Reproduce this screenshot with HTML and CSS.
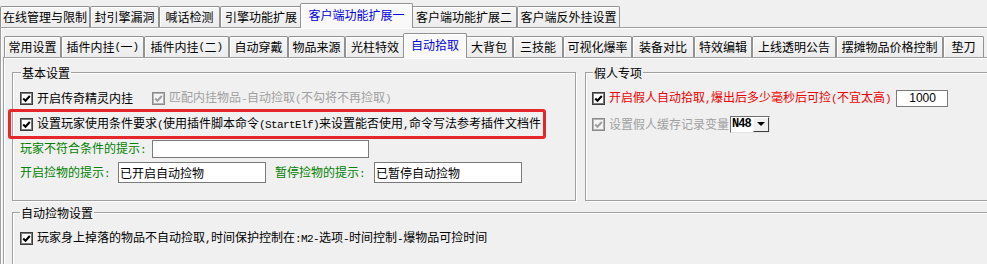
FILE: index.html
```html
<!DOCTYPE html>
<html lang="zh-CN">
<head>
<meta charset="utf-8">
<title>客户端功能扩展一</title>
<link rel="stylesheet" href="styles.css">
</head>
<body>
<div class="tabrow top">
  <div class="tab w90">在线管理与限制</div>
  <div class="tab w69">封引擎漏洞</div>
  <div class="tab w61">喊话检测</div>
  <div class="tab w82">引擎功能扩展</div>
  <div class="tab sel w113">客户端功能扩展一</div>
  <div class="tab w106">客户端功能扩展二</div>
  <div class="tab w103">客户端反外挂设置</div>
</div>
<div class="panel outer">
  <div class="tabrow sub">
    <div class="tab w57">常用设置</div>
    <div class="tab w83">插件内挂<span class="a">(</span>一<span class="a">)</span></div>
    <div class="tab w85">插件内挂<span class="a">(</span>二<span class="a">)</span></div>
    <div class="tab w59">自动穿戴</div>
    <div class="tab w57">物品来源</div>
    <div class="tab w60">光柱特效</div>
    <div class="tab sel w64">自动拾取</div>
    <div class="tab w48">大背包</div>
    <div class="tab w50">三技能</div>
    <div class="tab w69">可视化爆率</div>
    <div class="tab w62">装备对比</div>
    <div class="tab w58">特效编辑</div>
    <div class="tab w84">上线透明公告</div>
    <div class="tab w107">摆摊物品价格控制</div>
    <div class="tab w41">垫刀</div>
  </div>
  <div class="panel inner">
    <div class="grp-row">
      <div class="group g1">
        <span class="legend">基本设置</span>
        <div class="row">
          <svg class="cb" viewBox="0 0 13 13"><rect x="0.5" y="0.5" width="12" height="12" fill="#fff" stroke="#3c3c3c"/><rect x="1.5" y="1.5" width="10" height="10" fill="none" stroke="#7c7c7c"/><path d="M3.2 6.4l2.3 2.4L9.8 4" fill="none" stroke="#000" stroke-width="2.1"/></svg>
          <span>开启传奇精灵内挂</span>
          <svg class="cb gap19" viewBox="0 0 13 13"><rect x="0.5" y="0.5" width="12" height="12" fill="#f4f4f4" stroke="#8a8a8a"/><rect x="1.5" y="1.5" width="10" height="10" fill="none" stroke="#b4b4b4"/><path d="M3.2 6.4l2.3 2.4L9.8 4" fill="none" stroke="#a0a0a0" stroke-width="2.1"/></svg>
          <span class="dis">匹配内挂物品<span class="a">-</span>自动捡取<span class="a">(</span>不勾将不再捡取<span class="a">)</span></span>
        </div>
        <div class="hl">
          <svg class="cb" viewBox="0 0 13 13"><rect x="0.5" y="0.5" width="12" height="12" fill="#fff" stroke="#3c3c3c"/><rect x="1.5" y="1.5" width="10" height="10" fill="none" stroke="#7c7c7c"/><path d="M3.2 6.4l2.3 2.4L9.8 4" fill="none" stroke="#000" stroke-width="2.1"/></svg>
          <span>设置玩家使用条件要求<span class="a">(</span>使用插件脚本命令<span class="a">(StartElf)</span>来设置能否使用<span class="a">,</span>命令写法参考插件文档件</span>
        </div>
        <div class="row r3">
          <span class="lbl l132">玩家不符合条件的提示<span class="a">:</span></span>
          <span class="edit e1"></span>
        </div>
        <div class="row r4">
          <span class="lbl l98">开启捡物的提示<span class="a">:</span></span>
          <span class="edit e2">已开启自动捡物</span>
          <span class="lbl l99 gap9">暂停捡物的提示<span class="a">:</span></span>
          <span class="edit e2">已暂停自动捡物</span>
        </div>
      </div>
      <div class="group g2">
        <span class="legend lg7">假人专项</span>
        <div class="row">
          <svg class="cb" viewBox="0 0 13 13"><rect x="0.5" y="0.5" width="12" height="12" fill="#fff" stroke="#3c3c3c"/><rect x="1.5" y="1.5" width="10" height="10" fill="none" stroke="#7c7c7c"/><path d="M3.2 6.4l2.3 2.4L9.8 4" fill="none" stroke="#000" stroke-width="2.1"/></svg>
          <span class="red">开启假人自动拾取<span class="a">,</span>爆出后多少毫秒后可捡<span class="a">(</span>不宜太高<span class="a">)</span></span>
          <span class="edit num">1000</span>
        </div>
        <div class="row r2b">
          <svg class="cb" viewBox="0 0 13 13"><rect x="0.5" y="0.5" width="12" height="12" fill="#f4f4f4" stroke="#8a8a8a"/><rect x="1.5" y="1.5" width="10" height="10" fill="none" stroke="#b4b4b4"/><path d="M3.2 6.4l2.3 2.4L9.8 4" fill="none" stroke="#a0a0a0" stroke-width="2.1"/></svg>
          <span class="dis">设置假人缓存记录变量</span>
          <span class="combo"><span class="cval">N48</span><span class="cbtn"></span></span>
        </div>
      </div>
    </div>
    <div class="group g3">
      <span class="legend lg7">自动捡物设置</span>
      <div class="row">
        <svg class="cb" viewBox="0 0 13 13"><rect x="0.5" y="0.5" width="12" height="12" fill="#fff" stroke="#3c3c3c"/><rect x="1.5" y="1.5" width="10" height="10" fill="none" stroke="#7c7c7c"/><path d="M3.2 6.4l2.3 2.4L9.8 4" fill="none" stroke="#000" stroke-width="2.1"/></svg>
        <span>玩家身上掉落的物品不自动捡取<span class="a">,</span>时间保护控制在<span class="a">:M2-</span>选项<span class="a">-</span>时间控制<span class="a">-</span>爆物品可捡时间</span>
      </div>
    </div>
  </div>
</div>
</body>
</html>
```

FILE: styles.css
```css
* { box-sizing: border-box; }
html, body { margin: 0; padding: 0; }
body {
  width: 987px;
  height: 264px;
  overflow: hidden;
  background: #f0f0f0;
  color: #000;
  font-family: "Noto Sans CJK SC", "Noto Sans", sans-serif;
  font-size: 12px;
  line-height: 1;
}
.a {
  font-family: "Liberation Mono", monospace;
  font-size: 11px;
  letter-spacing: -0.6px;
}

/* tabs */
.tabrow { display: flex; align-items: flex-end; }
.tabrow.top { height: 27px; }
.tabrow.sub { height: 29px; padding-left: 1px; }
.tab {
  flex: none;
  height: 21px;
  display: flex;
  align-items: center;
  justify-content: center;
  white-space: nowrap;
  border: 1px solid #929292;
  border-bottom: none;
  border-radius: 2px 2px 0 0;
  background: linear-gradient(#f6f6f6, #ececec);
  box-shadow: inset 1px 1px 0 #fff;
}
.tab.sel {
  position: relative;
  z-index: 2;
  height: 25px;
  margin: 0 -2px -1px;
  padding-bottom: 2px;
  background: #f9f9f9;
  color: #0000dc;
}
.w41 { width: 41px; } .w48 { width: 48px; } .w50 { width: 50px; }
.w57 { width: 57px; } .w58 { width: 58px; } .w59 { width: 59px; }
.w60 { width: 60px; } .w61 { width: 61px; } .w62 { width: 62px; }
.w64 { width: 64px; } .w69 { width: 69px; } .w82 { width: 82px; }
.w83 { width: 83px; } .w84 { width: 84px; } .w85 { width: 85px; }
.w90 { width: 90px; } .w103 { width: 103px; } .w106 { width: 106px; }
.w107 { width: 107px; } .w113 { width: 113px; }

/* panels */
.panel {
  border-top: 1px solid #a0a0a0;
  border-left: 1px solid #a0a0a0;
  box-shadow: inset 1px 1px 0 #fff;
}
.outer { padding-left: 2px; height: 237px; overflow: hidden; }
.inner { padding: 14px 0 0 8px; height: 207px; overflow: hidden; }

/* group boxes */
.grp-row { display: flex; gap: 9px; }
.group {
  flex: none;
  position: relative;
  border: 1px solid #a0a0a0;
  box-shadow: inset 1px 1px 0 #fff, 1px 1px 0 #fff;
}
.g1 { width: 564px; height: 129px; padding: 15px 0 0 7px; }
.g2 { width: 403px; height: 129px; padding: 15px 0 0 6px; }
.g3 { width: 976px; height: 53px; margin-top: 11px; padding: 15px 0 0 7px; }
.legend {
  position: absolute;
  top: -7px;
  left: 8px;
  padding: 0 1px;
  line-height: 13px;
  background: #f0f0f0;
  white-space: nowrap;
}
.legend.lg7 { left: 7px; }

/* rows */
.row {
  display: flex;
  align-items: center;
  height: 20px;
  white-space: nowrap;
}
.cb { width: 13px; height: 13px; flex: none; margin-right: 4px; display: block; }
.gap19 { margin-left: 19px; }
.gap9 { margin-left: 9px; }
.dis { color: #a0a0a0; }
.red { color: #ee0000; }

.hl {
  display: flex;
  align-items: center;
  white-space: nowrap;
  width: 538px;
  height: 30px;
  margin: 1px 0 0 -12px;
  padding-left: 9px;
  border: 3px solid #e5262b;
  border-radius: 3px;
}
.r3 { height: 18px; margin-top: 1px; }
.r4 { height: 21px; margin-top: 4px; }
.r2b { margin-top: 6px; }

.lbl { color: #008000; flex: none; }
.l132 { width: 132px; }
.l98 { width: 98px; }
.l99 { width: 99px; }

.edit {
  flex: none;
  display: flex;
  align-items: center;
  height: 100%;
  padding-left: 1px;
  background: #fff;
  border: 1px solid #7a7a7a;
}
.e1 { width: 217px; }
.e2 { width: 148px; }
.num {
  width: 52px;
  height: 17px;
  margin-left: 5px;
  justify-content: center;
  font-family: "Liberation Sans", sans-serif;
  font-size: 12px;
}

.combo {
  flex: none;
  display: flex;
  width: 40px;
  height: 17px;
  margin-left: 1px;
  background: #fff;
  border: 1px solid;
  border-color: #6e6e6e #e4e4e4 #e4e4e4 #6e6e6e;
}
.cval {
  flex: 1;
  display: flex;
  align-items: center;
  padding-left: 1px;
  font-family: "Liberation Mono", monospace;
  font-weight: bold;
  font-size: 12px;
  letter-spacing: -1px;
}
.cbtn {
  flex: none;
  width: 16px;
  display: flex;
  align-items: center;
  justify-content: center;
  background: #f0f0f0;
  border: 1px solid;
  border-color: #fff #404040 #404040 #fff;
}
.cbtn::after {
  content: "";
  border-left: 4px solid transparent;
  border-right: 4px solid transparent;
  border-top: 4px solid #000;
}
```
